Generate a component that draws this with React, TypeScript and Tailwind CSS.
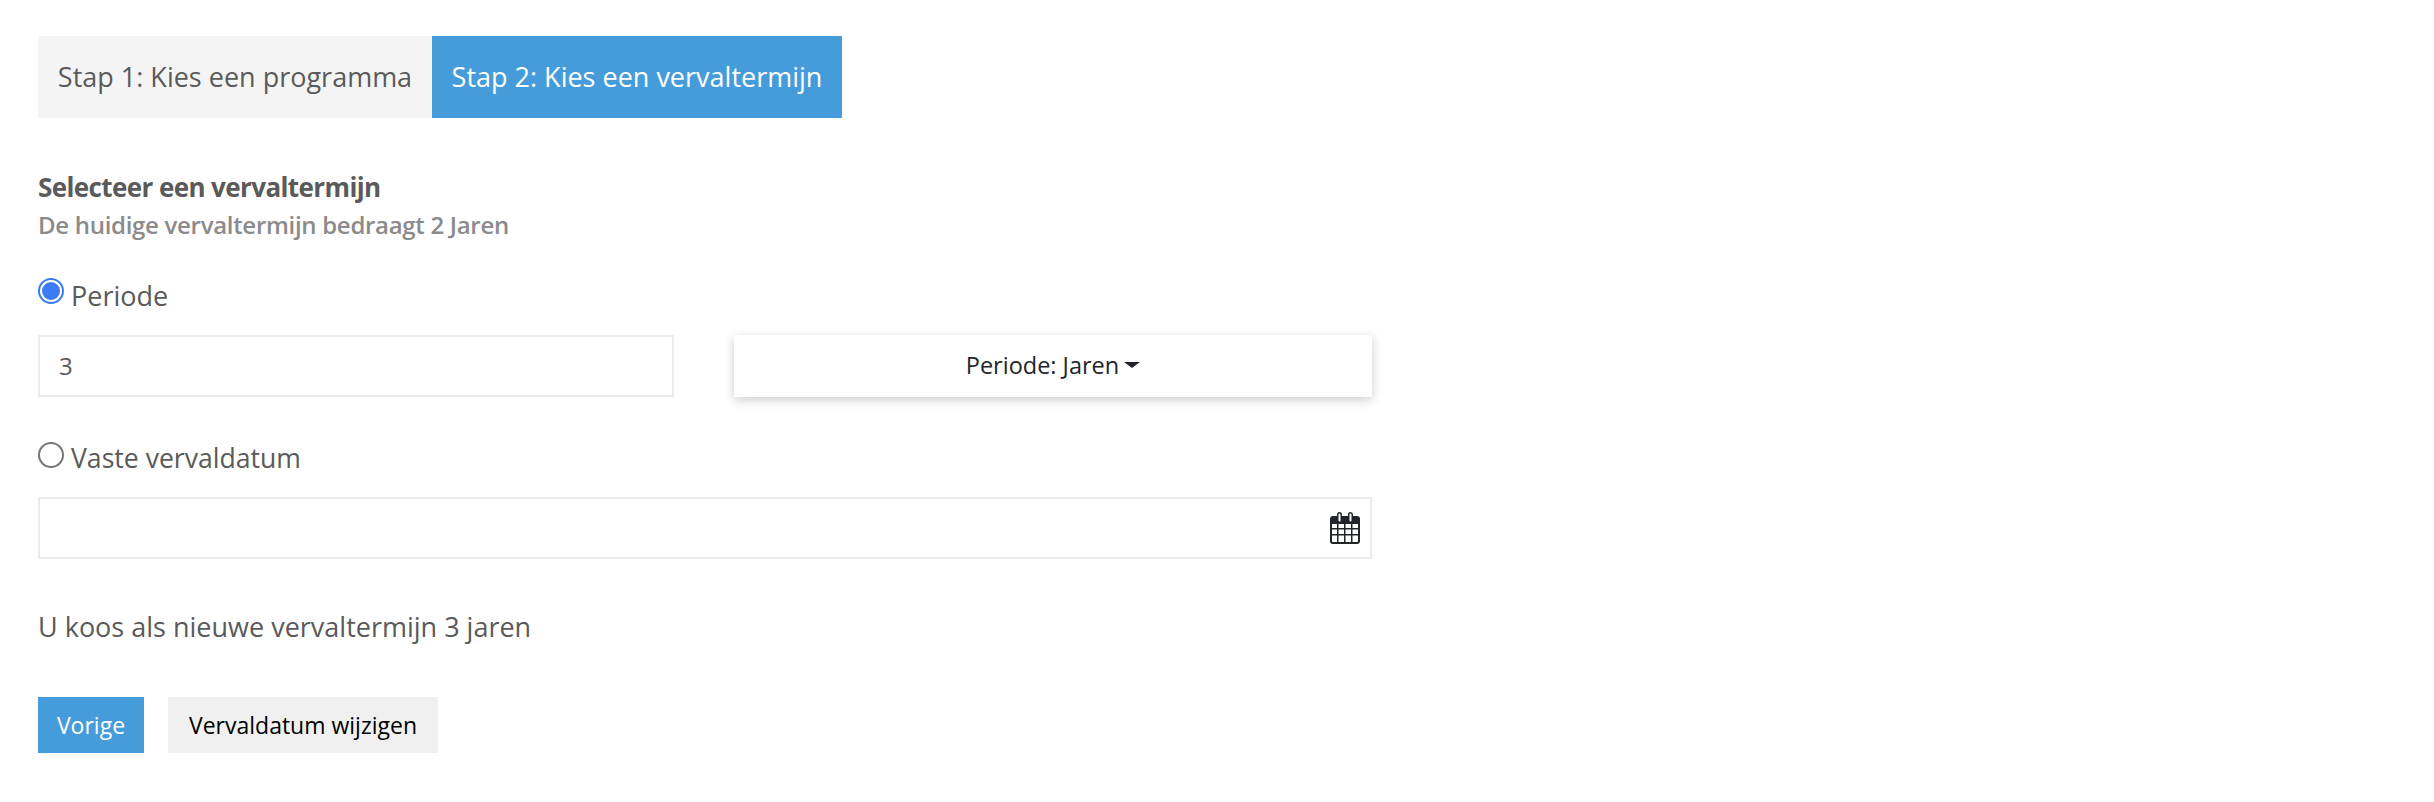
import React from 'react';

const CalendarIcon = () => (
  <svg width="30" height="32" viewBox="0 0 30 32" className="text-[#212529]">
    <path
      fill="currentColor"
      fillRule="evenodd"
      d="M3 4h4V2.5a2.5 2.5 0 0 1 5 0V4h6V2.5a2.5 2.5 0 0 1 5 0V4h4a3 3 0 0 1 3 3v22a3 3 0 0 1-3 3H3a3 3 0 0 1-3-3V7a3 3 0 0 1 3-3zM8.500 2.500v6a1 1 0 0 0 2 0v-6a1 1 0 0 0-2 0zm11 0v6a1 1 0 0 0 2 0v-6a1 1 0 0 0-2 0zM2 12v4h5v-4H2zm6.500 0v4h5.500v-4H8.500zm7 0v4H21v-4h-5.500zm7 0v4H28v-4h-5.500zM2 17.500V22h5v-4.500H2zm6.500 0V22h5.500v-4.500H8.500zm7 0V22H21v-4.500h-5.500zm7 0V22H28v-4.500h-5.500zM2 23.500V29a1 1 0 0 0 1 1h4v-6.500H2zm6.500 0V30h5.500v-6.500H8.500zm7 0V30H21v-6.500h-5.500zm7 0V30H27a1 1 0 0 0 1-1v-5.500h-5.500z"
    />
  </svg>
);

const App: React.FC = () => {
  return (
    <div className="min-h-screen bg-white px-[38px] pt-9 font-['Open_Sans',sans-serif] text-[#5a5a5a]">
      <div className="flex h-[82px] text-[27px]">
        <div className="flex w-[394px] items-center justify-center bg-[#f4f4f4]">Stap 1: Kies een programma</div>
        <div className="flex w-[410px] items-center justify-center bg-[#469cdb] text-white">Stap 2: Kies een vervaltermijn</div>
      </div>

      <h2 className="mt-[51px] text-[26px] leading-9 font-bold tracking-[-0.6px]">Selecteer een vervaltermijn</h2>
      <p className="mt-[2px] text-[24px] leading-9 font-semibold tracking-[-0.3px] text-[#8b8b8b]">De huidige vervaltermijn bedraagt 2 Jaren</p>

      <div className="w-[1334px]">
        <label className="mt-[36px] flex h-9 items-start gap-[7px] text-[27px] leading-9">
          <span className="mt-[-1px] flex size-[26px] items-center justify-center rounded-full border-2 border-[#3b7cf6]">
            <span className="size-[18px] rounded-full bg-[#3b7cf6]" />
          </span>
          <span className="mt-[-1px]">Periode</span>
        </label>

        <div className="mt-5 flex justify-between">
          <div className="flex h-[62px] w-[636px] items-center border-2 border-[#ebebeb] px-[19px] text-[24px]">3</div>
          <button className="flex h-[62px] w-[638px] items-center justify-center bg-white text-[23.5px] text-[#212529] shadow-[0_3px_10px_rgba(0,0,0,0.2)]">
            Periode: Jaren
            <span className="mb-[3px] ml-[5px] border-x-[8px] border-t-[6px] border-x-transparent border-t-[#212529]" />
          </button>
        </div>

        <label className="mt-[44px] flex h-9 items-start gap-[7px] text-[26.6px] leading-9">
          <span className="mt-[1px] size-[26px] rounded-full border-2 border-[#767676]" />
          <span className="mt-[-1px]">Vaste vervaldatum</span>
        </label>

        <div className="mt-5 flex h-[62px] items-center justify-end border-2 border-[#ebebeb] pr-[10px]">
          <CalendarIcon />
        </div>
      </div>

      <p className="mt-[50px] text-[27px] leading-9">U koos als nieuwe vervaltermijn 3 jaren</p>

      <div className="mt-[52px] flex gap-6 text-[23px]">
        <button className="h-[56px] w-[106px] bg-[#469cdb] text-white">Vorige</button>
        <button className="h-[56px] w-[270px] bg-[#f0f0f0] text-black">Vervaldatum wijzigen</button>
      </div>
    </div>
  );
};

export default App;
